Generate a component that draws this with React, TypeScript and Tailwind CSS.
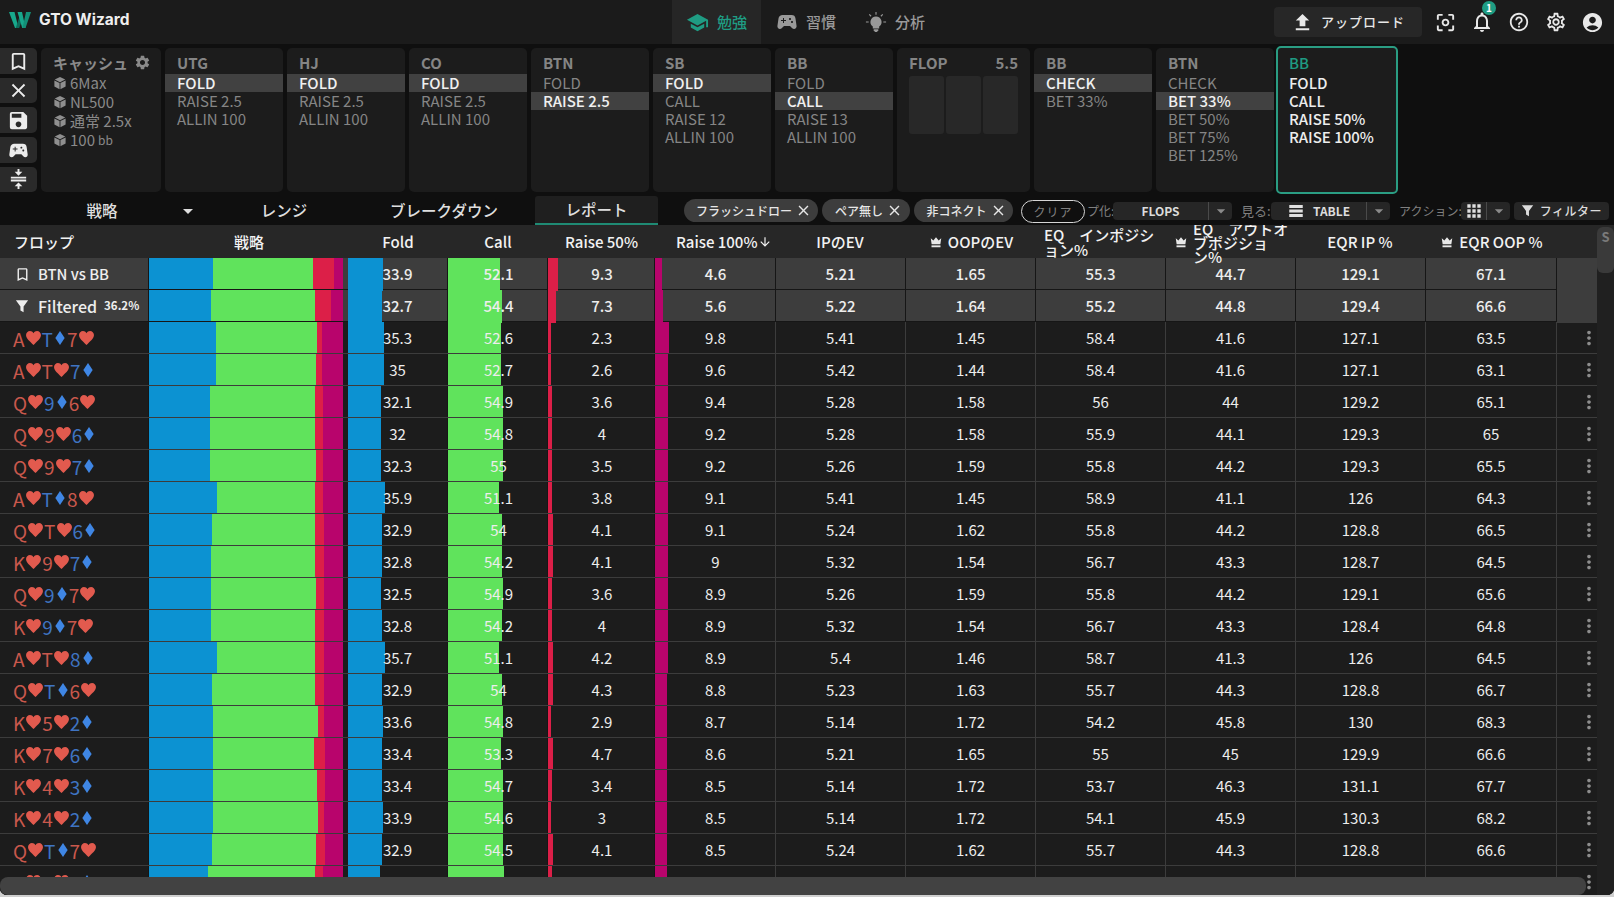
import React from "react";
import {
  MdBookmarkBorder, MdClose, MdSave, MdSportsEsports, MdCompress, MdSettings, MdSchool,
  MdFileUpload, MdCenterFocusWeak, MdNotificationsNone, MdHelpOutline, MdOutlineSettings, MdAccountCircle,
  MdArrowDownward, MdMoreVert, MdApps, MdTableRows, MdArrowDropDown,
} from "react-icons/md";

const Cube = () => (
  <svg viewBox="0 0 16 16" className="w-[14px] h-[14px] shrink-0" fill="#8f8f8f">
    <path d="M8 1l6 3-6 3-6-3 6-3z" />
    <path d="M1.600 5.200L7.500 8v7L1.600 12V5.200z" />
    <path d="M14.400 5.200L8.500 8v7l5.900-3V5.200z" />
  </svg>
);
const Crown = () => (
  <svg viewBox="0 0 16 16" className="w-[12px] h-[12px] shrink-0" fill="#e8e8e8">
    <path d="M1 3l3.500 3L8 1.500 11.500 6 15 3l-1.200 8H2.200L1 3z" />
    <path d="M2 12.500h12V15H2z" />
  </svg>
);
const Funnel = ({ c = "w-[13px] h-[13px]" }: { c?: string }) => (
  <svg viewBox="0 0 16 16" className={c} fill="currentColor">
    <path d="M1 1.500h14L9.800 8.500V15L6.200 13V8.500L1 1.500z" />
  </svg>
);
const Bulb = () => (
  <svg viewBox="0 0 24 24" className="w-[22px] h-[22px]" fill="#999">
    <path d="M12 6a6 6 0 0 0-3.500 10.900V19h7v-2.100A6 6 0 0 0 12 6z" />
    <path d="M9.500 20h5v1.200L13 23h-2l-1.500-1.800V20z" />
    <path d="M11.400 1h1.200v3h-1.200zM1 11.400h3v1.200H1zM20 11.400h3v1.200h-3zM4.200 4.200l.9-.9 2 2-.9.9zM16.900 5.300l2-2 .9.900-2 2z" />
  </svg>
);
const Logo = () => (
  <svg viewBox="0 0 22 16" className="w-[22px] h-[16px] shrink-0">
    <path d="M0 0h5.500L9.500 16H6L0 0z" fill="#18a88c" />
    <path d="M6.800 16L11 3l2 5-2.800 8H6.800z" fill="#0e6e5c" />
    <path d="M8.500 0h4.500l3.500 16h-3.300L8.500 0z" fill="#18a88c" />
    <path d="M13.500 16L17 0h5l-5.500 16h-3z" fill="#138f77" />
  </svg>
);
const Heart = () => (
  <svg viewBox="0 0 16 15" className="w-[15px] h-[14px] mx-[1px] mb-[1px]" fill="#e25a4e">
    <path d="M8 15C4 11 0 8 0 4.300 0 1.800 2 0 4.200 0 5.800 0 7.200.9 8 2.300 8.800.9 10.200 0 11.800 0 14 0 16 1.800 16 4.300 16 8 12 11 8 15z" />
  </svg>
);
const Diamond = () => (
  <svg viewBox="0 0 10 15" className="w-[10px] h-[14px] mx-[2px] mb-[1px]" fill="#3f86e4">
    <path d="M5 0l5 7.500L5 15 0 7.500z" />
  </svg>
);

type Card = [string, "h" | "d"];
const Flop = ({ cards }: { cards: Card[] }) => (
  <div className="flex items-center text-[19px] leading-none">
    {cards.map(([r, s], i) => (
      <span key={i} className={s === "h" ? "flex items-center text-[#c9584c]" : "flex items-center text-[#3f74c2]"}>
        {r}
        {s === "h" ? <Heart /> : <Diamond />}
      </span>
    ))}
  </div>
);

const parseFlop = (f: string): Card[] => [
  [f[0], f[1] as "h"],
  [f[2], f[3] as "h"],
  [f[4], f[5] as "h"],
];

const rows: [string, ...number[]][] = [
  ["AhTd7h", 35.3, 52.6, 2.3, 9.8, 5.41, 1.45, 58.4, 41.6, 127.1, 63.5],
  ["AhTh7d", 35, 52.7, 2.6, 9.6, 5.42, 1.44, 58.4, 41.6, 127.1, 63.1],
  ["Qh9d6h", 32.1, 54.9, 3.6, 9.4, 5.28, 1.58, 56, 44, 129.2, 65.1],
  ["Qh9h6d", 32, 54.8, 4, 9.2, 5.28, 1.58, 55.9, 44.1, 129.3, 65],
  ["Qh9h7d", 32.3, 55, 3.5, 9.2, 5.26, 1.59, 55.8, 44.2, 129.3, 65.5],
  ["AhTd8h", 35.9, 51.1, 3.8, 9.1, 5.41, 1.45, 58.9, 41.1, 126, 64.3],
  ["QhTh6d", 32.9, 54, 4.1, 9.1, 5.24, 1.62, 55.8, 44.2, 128.8, 66.5],
  ["Kh9h7d", 32.8, 54.2, 4.1, 9, 5.32, 1.54, 56.7, 43.3, 128.7, 64.5],
  ["Qh9d7h", 32.5, 54.9, 3.6, 8.9, 5.26, 1.59, 55.8, 44.2, 129.1, 65.6],
  ["Kh9d7h", 32.8, 54.2, 4, 8.9, 5.32, 1.54, 56.7, 43.3, 128.4, 64.8],
  ["AhTh8d", 35.7, 51.1, 4.2, 8.9, 5.4, 1.46, 58.7, 41.3, 126, 64.5],
  ["QhTd6h", 32.9, 54, 4.3, 8.8, 5.23, 1.63, 55.7, 44.3, 128.8, 66.7],
  ["Kh5h2d", 33.6, 54.8, 2.9, 8.7, 5.14, 1.72, 54.2, 45.8, 130, 68.3],
  ["Kh7h6d", 33.4, 53.3, 4.7, 8.6, 5.21, 1.65, 55, 45, 129.9, 66.6],
  ["Kh4h3d", 33.4, 54.7, 3.4, 8.5, 5.14, 1.72, 53.7, 46.3, 131.1, 67.7],
  ["Kh4h2d", 33.9, 54.6, 3, 8.5, 5.14, 1.72, 54.1, 45.9, 130.3, 68.2],
  ["QhTd7h", 32.9, 54.5, 4.1, 8.5, 5.24, 1.62, 55.7, 44.3, 128.8, 66.6],
  ["Kh8h6d", 31, 55.9, 3.9, 8.4, 5.2, 1.66, 55.2, 44.8, 129.5, 66.9],
];

const GRID = "grid grid-cols-[149px_199px_100px_100px_107px_120px_130px_130px_130px_130px_130px_131px_42px]";

const Bar = ({ pct, color, k, label, extra, nudge }: { pct: number; color: string; k: number; label: number; extra: string; nudge: string }) => (
  <div className={`relative flex items-center justify-center ${extra}`}>
    <div className={`absolute left-0 top-0 bottom-0 ${color}`} style={{ width: `${pct * k + (k > 1.2 ? 1 : 0)}px` }} />
    <span className={`relative ${nudge}`}>{label}</span>
  </div>
);

const DataRow = ({ left, d, sticky }: { left: React.ReactNode; d: number[]; sticky?: boolean }) => {
  const line = sticky ? "border-[#161616]" : "border-[#3c3c3c]";
  const bg = sticky ? "bg-[#3d3d3d] font-medium" : "bg-[#1c1c1c]";
  const nudge = sticky ? "" : "pt-[1px]";
  return (
    <div className={`${GRID} h-[32px] border-b ${line} ${bg} text-[15px] text-[#ededed]`}>
      <div className={`flex items-center overflow-hidden border-r border-[#161616] ${nudge}`}>{left}</div>
      <div className="flex h-[31px]">
        <div className="w-[194px] h-full flex">
          <div className="bg-[#0c92d2]" style={{ width: `${d[0] * 0.98}%` }} />
          <div className="bg-[#60e35c]" style={{ width: `${d[1] * 0.985}%` }} />
          <div className="bg-[#dc1f48]" style={{ width: `${d[2] * 1.15}%` }} />
          <div className="bg-[#b8046c] flex-1" />
        </div>
      </div>
      <Bar pct={d[0]} k={1.03} color="bg-[#0c92d2]" label={d[0]} extra="border-r border-[#161616]" nudge={nudge} />
      <Bar pct={d[1]} k={1} color="bg-[#60e35c]" label={d[1]} extra="border-r border-[#161616] pl-[2px]" nudge={nudge} />
      <Bar pct={d[2]} k={1.1} color="bg-[#dc1f48]" label={d[2]} extra="border-r border-[#161616] pl-[2px]" nudge={nudge} />
      <Bar pct={d[3]} k={1.3} color="bg-[#b8046c]" label={d[3]} extra="pl-[1px]" nudge={nudge} />
      {d.slice(4).map((v, i) => (
        <div key={i} className={`flex items-center justify-center border-l ${line} ${nudge}`}>{v}</div>
      ))}
      {sticky ? (
        <div className={`border-l ${line} h-[33px] bg-[#3d3d3d]`} />
      ) : (
        <div className={`border-l ${line} flex items-center justify-end`}>
          <MdMoreVert className="text-[#8d8d8d] text-[22px] -mr-[2px]" />
        </div>
      )}
    </div>
  );
};

const ActionCard = ({ title, items, sel }: { title: string; items: string[]; sel: number }) => (
  <div className="w-[118px] h-[144px] bg-[#1c1c1c] rounded-[5px] pt-[4px] shrink-0">
    <div className="px-[12px] h-[22px] leading-[22px] text-[15px] font-semibold text-[#858585]">{title}</div>
    {items.map((t, i) => (
      <div
        key={t}
        className={`h-[18px] leading-[18px] px-[12px] text-[15px] ${i === sel ? "bg-[#414141] font-medium text-[#f0f0f0]" : "text-[#858585]"}`}
      >
        {t}
      </div>
    ))}
  </div>
);

const Tool = ({ children, h = "h-[26px]" }: { children: React.ReactNode; h?: string }) => (
  <div className={`${h} w-[37px] rounded-r-[5px] bg-[#2a2a2a] flex items-center justify-center text-[#ececec] text-[23px]`}>{children}</div>
);

const Chip = ({ t, w }: { t: string; w: string }) => (
  <div className={`${w} h-[23px] rounded-full bg-[#3d3d3d] flex items-center justify-center gap-[3px] pl-[6px] text-[12px] text-[#e6e6e6] font-medium shrink-0`}>
    {t}
    <MdClose className="text-[17px]" />
  </div>
);

const Select = ({ w, split, children }: { w: string; split: string; children: React.ReactNode }) => (
  <div className={`${w} h-[18px] rounded-[4px] bg-[#262626] flex items-center text-[12px] font-bold text-[#dcdcdc] shrink-0`}>
    <div className={`${split} flex items-center justify-center gap-[8px] border-r border-[#4a4a4a] h-full`}>{children}</div>
    <div className="flex-1 flex justify-center text-[#8a8a8a] text-[20px]"><MdArrowDropDown /></div>
  </div>
);

const Head = ({ children, c = "justify-center" }: { children: React.ReactNode; c?: string }) => (
  <div className={`flex items-center ${c} overflow-hidden pt-[1px]`}>{children}</div>
);

export default function App() {
  return (
    <div className="relative w-[1614px] h-[897px] overflow-hidden bg-[#cfcfcf] font-['Noto_Sans_CJK_JP','Noto_Sans',sans-serif]">
      <div className="h-[895px] bg-[#0f0f0f] rounded-b-[7px] overflow-hidden flex flex-col">
        {/* top bar */}
        <div className="h-[44px] shrink-0 bg-[#1b1b1b] flex items-center relative">
          <div className="w-[672px] flex items-center pl-[9px] pb-[4px] gap-[8px]">
            <Logo />
            <span className="font-['Inter',sans-serif] text-[15.5px] font-bold text-[#efefef] whitespace-nowrap">GTO Wizard</span>
          </div>
          <div className="flex h-full text-[15px] text-[#999]">
            <div className="w-[89px] bg-[#262626] flex items-center justify-center gap-[8px] text-[#1f9c83] font-medium">
              <MdSchool className="text-[23px]" />
              <span>勉強</span>
            </div>
            <div className="w-[94px] flex items-center pl-[14px] gap-[7px] font-medium">
              <MdSportsEsports className="text-[24px]" />
              <span>習慣</span>
            </div>
            <div className="w-[84px] flex items-center pl-[10px] gap-[8px] font-medium">
              <Bulb />
              <span>分析</span>
            </div>
          </div>
          <div className="ml-auto flex items-center text-[#e8e8e8] pr-[3px]">
            <div className="w-[148px] h-[30px] bg-[#272727] rounded-[4px] flex items-center justify-center gap-[7px] text-[13px] font-medium tracking-[1px] mr-[5px]">
              <MdFileUpload className="text-[23px]" />
              アップロード
            </div>
            <div className="w-[36px] flex justify-center text-[23px]"><MdCenterFocusWeak /></div>
            <div className="relative w-[38px] flex justify-center text-[24px]">
              <MdNotificationsNone />
              <span className="absolute -top-[9px] left-[19px] w-[14px] h-[14px] rounded-full bg-[#1f9c83] text-white text-[10px] leading-[14px] text-center font-bold">1</span>
            </div>
            <div className="w-[36px] flex justify-center text-[22px]"><MdHelpOutline /></div>
            <div className="w-[37px] flex justify-center text-[22px]"><MdOutlineSettings /></div>
            <div className="w-[37px] flex justify-center text-[23px] pr-[1px]"><MdAccountCircle /></div>
          </div>
        </div>

        {/* action cards */}
        <div className="h-[152px] shrink-0 flex items-start pt-[4px]">
          <div className="w-[41px] flex flex-col gap-[4px] shrink-0">
            <Tool><MdBookmarkBorder /></Tool>
            <Tool h="h-[25px]"><MdClose /></Tool>
            <Tool><MdSave /></Tool>
            <Tool><MdSportsEsports /></Tool>
            <Tool h="h-[25px]"><MdCompress /></Tool>
          </div>
          <div className="flex gap-[4px] items-start">
            <div className="w-[120px] h-[144px] bg-[#1c1c1c] rounded-[5px] pl-[12px] pt-[4px] text-[15px] text-[#8a8a8a]">
              <div className="h-[21px] leading-[21px] font-semibold flex items-center">
                キャッシュ
                <MdSettings className="ml-[6px] text-[17px]" />
              </div>
              {["6Max", "NL500", "通常 2.5x"].map((t) => (
                <div key={t} className="h-[19px] leading-[19px] flex items-center gap-[3px]"><Cube />{t}</div>
              ))}
              <div className="h-[19px] leading-[19px] flex items-center gap-[3px]"><Cube />100 <span className="text-[12px]">bb</span></div>
            </div>
            <ActionCard title="UTG" items={["FOLD", "RAISE 2.5", "ALLIN 100"]} sel={0} />
            <ActionCard title="HJ" items={["FOLD", "RAISE 2.5", "ALLIN 100"]} sel={0} />
            <ActionCard title="CO" items={["FOLD", "RAISE 2.5", "ALLIN 100"]} sel={0} />
            <ActionCard title="BTN" items={["FOLD", "RAISE 2.5"]} sel={1} />
            <ActionCard title="SB" items={["FOLD", "CALL", "RAISE 12", "ALLIN 100"]} sel={0} />
            <ActionCard title="BB" items={["FOLD", "CALL", "RAISE 13", "ALLIN 100"]} sel={1} />
            <div className="w-[133px] h-[144px] bg-[#1c1c1c] rounded-[5px] px-[12px] pt-[4px] shrink-0">
              <div className="h-[22px] leading-[22px] text-[15px] font-semibold text-[#858585] flex justify-between">
                <span>FLOP</span><span>5.5</span>
              </div>
              <div className="mt-[2px] flex gap-[2px]">
                <div className="w-[35px] h-[58px] rounded-[3px] bg-[#282828]" />
                <div className="w-[35px] h-[58px] rounded-[3px] bg-[#282828]" />
                <div className="w-[35px] h-[58px] rounded-[3px] bg-[#282828]" />
              </div>
            </div>
            <ActionCard title="BB" items={["CHECK", "BET 33%"]} sel={0} />
            <ActionCard title="BTN" items={["CHECK", "BET 33%", "BET 50%", "BET 75%", "BET 125%"]} sel={1} />
            <div className="-ml-[2px] -mt-[2px] w-[122px] h-[148px] border-2 border-[#2a9d83] rounded-[5px] bg-[#1c1c1c] pl-[11px] pt-[4px] text-[15px] font-medium text-[#ededed] shrink-0">
              <div className="h-[22px] leading-[22px] text-[#1f9c83]">BB</div>
              {["FOLD", "CALL", "RAISE 50%", "RAISE 100%"].map((t) => (
                <div key={t} className="h-[18px] leading-[18px]">{t}</div>
              ))}
            </div>
          </div>
        </div>

        {/* tab bar */}
        <div className="h-[29px] shrink-0 flex items-end text-[15.5px] font-medium text-[#dedede]">
          <div className="w-[215px] h-[28px] relative flex items-center justify-center">
            <span className="-ml-[11px]">戦略</span>
            <MdArrowDropDown className="absolute left-[176px] text-[24px]" />
          </div>
          <div className="w-[138px] h-[28px] flex items-center justify-center">レンジ</div>
          <div className="w-[182px] h-[28px] flex items-center justify-center">ブレークダウン</div>
          <div className="w-[123px] h-[29px] bg-[#1f1f1f] border-b-2 border-[#1f8a74] rounded-t-[3px] flex items-center justify-center pt-[1px]">レポート</div>
          <div className="w-[26px]" />
          <div className="flex items-center gap-[4px] h-[29px]">
            <Chip t="フラッシュドロー" w="w-[134px]" />
            <Chip t="ペア無し" w="w-[88px]" />
            <Chip t="非コネクト" w="w-[99px]" />
          </div>
          <div className="relative flex-1 h-[29px] flex items-center text-[12px] font-normal text-[#808080]">
            <div className="absolute left-[8px] top-[4px] w-[64px] h-[23px] rounded-full border border-[#d5d5d5] bg-[#0f0f0f] flex items-center justify-center text-[12px] tracking-[1px]">クリア</div>
            <span className="ml-[74px] w-[25px] whitespace-nowrap">プ化:</span>
            <Select w="w-[119px] ml-[1px]" split="w-[96px]">FLOPS</Select>
            <span className="ml-[9px] w-[30px] text-[13px] whitespace-nowrap">見る:</span>
            <Select w="w-[119px]" split="w-[96px]"><MdTableRows className="text-[18px] text-[#e0e0e0]" />TABLE</Select>
            <span className="ml-[9px] w-[62px] text-[12px] whitespace-nowrap">アクション:</span>
            <Select w="w-[49px]" split="w-[26px]"><MdApps className="text-[20px] text-[#e0e0e0]" /></Select>
            <div className="ml-[4px] w-[95px] h-[18px] rounded-[4px] bg-[#262626] flex items-center justify-center gap-[6px] text-[12px] font-medium text-[#dcdcdc] tracking-[0.5px]">
              <Funnel />
              フィルター
            </div>
          </div>
        </div>

        {/* table */}
        <div className="relative flex-1 overflow-hidden bg-[#1c1c1c] text-left">
          <div className={`${GRID} grid-rows-[33px] relative z-10 h-[33px] bg-[#272727] text-[15px] font-medium text-[#f2f2f2]`}>
            <Head c="justify-start pl-[14px]">フロップ</Head>
            <Head c="justify-start pl-[85px]">戦略</Head>
            <Head>Fold</Head>
            <Head>Call</Head>
            <Head>Raise 50%</Head>
            <Head c="justify-start pl-[21px]"><span className="flex items-center whitespace-nowrap">Raise 100%<MdArrowDownward className="text-[14px]" /></span></Head>
            <Head>IPのEV</Head>
            <Head c="justify-center pl-[3px]"><span className="flex items-center gap-[6px]"><Crown />OOPのEV</span></Head>
            <div className="pl-[9px] pr-[6px] pt-[1px] text-[15px] leading-[15px] flex items-center">
              <span>EQ　インポジション%</span>
            </div>
            <div className="relative pl-[28px] pr-[6px] pt-[3px] text-[15px] leading-[14px] flex items-center">
              <span className="absolute left-[10px] top-[11px]"><Crown /></span>
              <span>EQ　アウトオブポジション%</span>
            </div>
            <Head>EQR IP %</Head>
            <Head c="justify-center pl-[3px]"><span className="flex items-center gap-[6px]"><Crown />EQR OOP %</span></Head>
            <div />
          </div>

          <DataRow
            sticky
            left={
              <div className="flex items-center pl-[14px] gap-[7px] -mt-[1px] font-medium text-[14.8px] text-[#eee]">
                <MdBookmarkBorder className="text-[17px]" />
                BTN vs BB
              </div>
            }
            d={[33.9, 52.1, 9.3, 4.6, 5.21, 1.65, 55.3, 44.7, 129.1, 67.1]}
          />
          <DataRow
            sticky
            left={
              <div className="flex items-center pl-[15px] -mt-[2px] font-medium text-[#eee] whitespace-nowrap">
                <Funnel c="w-[14px] h-[14px]" />
                <span className="ml-[9px] text-[16px]">Filtered</span>
                <span className="ml-[7px] text-[11.5px] font-bold">36.2%</span>
              </div>
            }
            d={[32.7, 54.4, 7.3, 5.6, 5.22, 1.64, 55.2, 44.8, 129.4, 66.6]}
          />
          {rows.map((r, i) => (
            <DataRow key={i} left={<div className="pl-[13px]"><Flop cards={parseFlop(r[0])} /></div>} d={r.slice(1) as number[]} />
          ))}

          {/* right vertical scrollbar */}
          <div className="absolute right-0 top-0 bottom-0 w-[17px] bg-[#202020] z-20">
            <div className="h-[33px] bg-[#272727]" />
            <div className="absolute left-0 right-0 top-[2px] h-[46px] bg-[#3a3a3a] rounded-[6px] text-center text-[13px] font-bold text-[#7a7a7a]">S</div>
          </div>
          {/* bottom horizontal scrollbar */}
          <div className="absolute left-0 bottom-0 w-[1586px] h-[18px] bg-[#424242] rounded-[8px] z-20" />
        </div>
      </div>
    </div>
  );
}
